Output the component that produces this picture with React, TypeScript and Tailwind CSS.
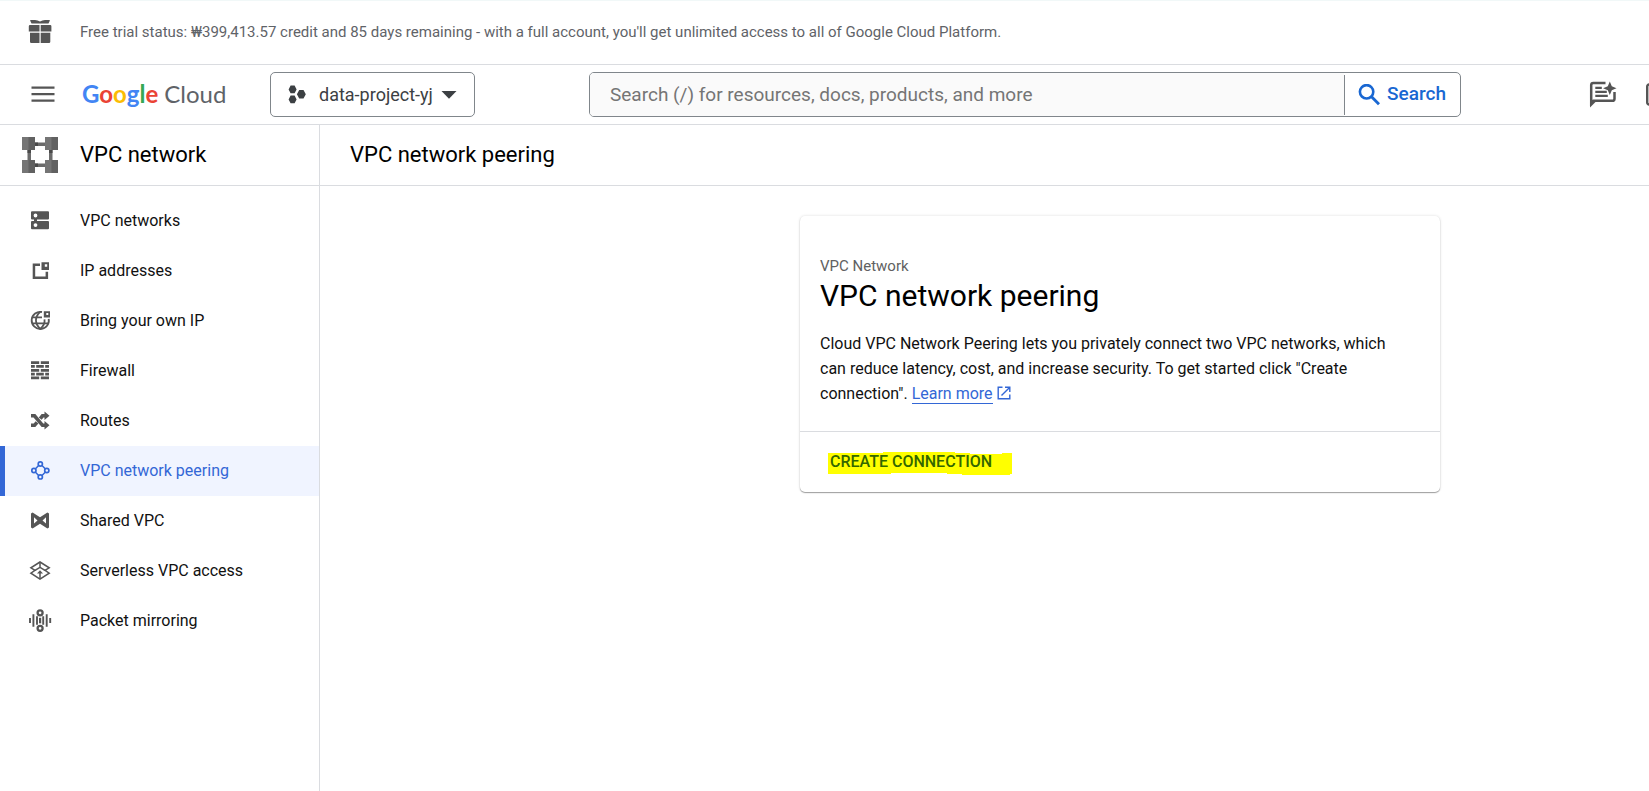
import type { ReactNode } from "react";

type IconProps = { children: ReactNode };

function NavIcon({ children }: IconProps) {
  return (
    <svg viewBox="0 0.7 24 24" className="size-6 shrink-0" fill="currentColor" aria-hidden="true">
      {children}
    </svg>
  );
}

const navItems: { label: string; active?: boolean; icon: ReactNode }[] = [
  {
    label: "VPC networks",
    icon: (
      <path
        fillRule="evenodd"
        d="M4 3h16a1 1 0 0 1 1 1v6.300a1 1 0 0 1-1 1H9v1.400h11a1 1 0 0 1 1 1V20a1 1 0 0 1-1 1H4a1 1 0 0 1-1-1v-6.300a1 1 0 0 1 1-1h2v-1.400H4a1 1 0 0 1-1-1V4a1 1 0 0 1 1-1zm3.500 2.300a1.900 1.900 0 1 0 0 3.800 1.900 1.900 0 0 0 0-3.800zm0 9.600a1.900 1.900 0 1 0 0 3.800 1.900 1.900 0 0 0 0-3.800z"
      />
    ),
  },
  {
    label: "IP addresses",
    icon: (
      <>
        <path d="M4.700 5.300H12v2.500H7.200v10.400h10.400V13.500h2.500v7.200H4.700z" />
        <path fillRule="evenodd" d="M13.500 4H21v7.700h-7.500zM16.800 6v2.500h2.400V6z" />
      </>
    ),
  },
  {
    label: "Bring your own IP",
    icon: (
      <>
        <g fill="none" stroke="currentColor" strokeWidth="1.800">
          <path d="M14 3.700A8.600 8.600 0 1 0 20.700 10.500" />
          <path d="M12.300 3.400C6.500 8.500 6.500 15.500 12.300 20.600C15.800 17.300 17 14 16.500 11" />
          <path d="M4.200 9H14M4.200 15H20.300" />
        </g>
        <path fillRule="evenodd" d="M15.800 3H22v6.300h-6.200zM18.300 4.800v2h2v-2z" />
      </>
    ),
  },
  {
    label: "Firewall",
    icon: (
      <path d="M3 3h8.200v2.700H3zM12.800 3H21v2.700h-8.200zM3 6.800h3.800v2.700H3zM8.200 6.800h7.600v2.700H8.200zM17.200 6.800H21v2.700h-3.800zM3 10.700h8.200v2.700H3zM12.800 10.700H21v2.700h-8.200zM3 14.500h3.800v2.700H3zM8.200 14.500h7.600v2.700H8.200zM17.200 14.500H21v2.700h-3.800zM3 18.300h8.200V21H3zM12.800 18.300H21V21h-8.200z" />
    ),
  },
  {
    label: "Routes",
    icon: (
      <>
        <path
          d="M3 7.500H6.500L14.500 17H17.500M3 17H6.500L9 14M12.200 10.400L14.500 7.500H17.500"
          fill="none"
          stroke="currentColor"
          strokeWidth="3.600"
        />
        <path d="M16.500 3.200L21.500 7.500l-5 4.300zM16.500 12.700L21.500 17l-5 4.300z" />
      </>
    ),
  },
  {
    label: "VPC network peering",
    active: true,
    icon: (
      <g fill="none" stroke="currentColor" strokeWidth="1.700">
        <circle cx="12.300" cy="5.700" r="2.100" />
        <circle cx="5.900" cy="12.200" r="2.100" />
        <circle cx="18.800" cy="12.200" r="2.100" />
        <circle cx="12.300" cy="18.600" r="2.100" />
        <path d="M10.600 7.100L7.500 10.400M14 7.100L17.200 10.400M10.600 17.200L7.500 14M14 17.200L17.200 14" strokeWidth="1.500" />
      </g>
    ),
  },
  {
    label: "Shared VPC",
    icon: (
      <path
        fillRule="evenodd"
        d="M4.600 4.300L12 8.900l7.400-4.600L21 5.200v14l-1.600.9L12 15.500l-7.400 4.600L3 19.200v-14zM6 9v6.300l3.500-3.100zM18 9l-3.500 3.200 3.500 3.100z"
      />
    ),
  },
  {
    label: "Serverless VPC access",
    icon: (
      <g fill="none" stroke="currentColor" strokeWidth="1.500">
        <path d="M12 3.700L2.900 9.500L7 12L2.900 14.900L12 20.800L21.200 14.900L17 12L21.200 9.500z" />
        <path d="M12 3.700V9M12 14V20.500M7 12L12 9L17 12" />
        <path d="M9 15.300L12 12L15 15.300z" fill="currentColor" stroke="none" />
      </g>
    ),
  },
  {
    label: "Packet mirroring",
    icon: (
      <g fill="none" stroke="currentColor" strokeWidth="2.300">
        <path d="M2 9.800v5M5.400 6v12.500M18.700 6v12.500M22.200 9.800v5" strokeWidth="1.900" />
        <path d="M9 8v8.500M15.200 8v8.500" strokeWidth="1.900" />
        <path d="M12.100 9.500v5.500" strokeWidth="2.200" />
        <circle cx="12.100" cy="4.500" r="2.500" />
        <circle cx="12.100" cy="20" r="2.500" />
      </g>
    ),
  },
];

function TrialBanner() {
  return (
    <div className="box-content flex h-[62px] items-center gap-7 border-t border-b border-t-[#f1f8f8] border-b-[#dadce0] pb-px pl-7">
      <svg viewBox="0 0 24 24" className="size-6 shrink-0 text-[#555]" fill="currentColor" aria-hidden="true">
        <path d="M2 .300C5-.300 9-.300 12 1.500C15-.300 19-.300 22 .300L20.500 3.500H3.500z" />
        <path d="M2 5h9.500v6.500H.8V6.200Q.8 5 2 5zM12.700 5h9.500q1.200 0 1.200 1.200v5.300H12.700zM2 12.700h9.500V23H3.300Q2 23 2 21.700zM12.700 12.700h9.600v9q0 1.300-1.300 1.300h-8.300z" />
      </svg>
      <p className="text-[15px] leading-5 text-[#5f6368]">
        Free trial status: ₩399,413.57 credit and 85 days remaining - with a full account, you'll get
        unlimited access to all of Google Cloud Platform.
      </p>
    </div>
  );
}

function Logo() {
  return (
    <a
      href="#home"
      aria-label="Google Cloud"
      className="flex w-[188px] shrink-0 gap-1.5 pb-0.5 font-[Lato,sans-serif] text-2xl leading-7 whitespace-nowrap text-[#5f6368]"
    >
      <span className="font-bold">
        <span className="text-[#4285f4]">G</span>
        <span className="text-[#ea4335]">o</span>
        <span className="text-[#fbbc04]">o</span>
        <span className="text-[#4285f4]">g</span>
        <span className="text-[#34a853]">l</span>
        <span className="text-[#ea4335]">e</span>
      </span>
      <span>Cloud</span>
    </a>
  );
}

function TopBar() {
  return (
    <header className="box-content flex h-[59px] items-center overflow-hidden border-b border-[#dadce0] pl-[30px]">
      <button type="button" aria-label="Navigation menu" className="mr-[26px] shrink-0 text-[#555]">
        <svg viewBox="0 0 26 26" className="size-[26px]" fill="currentColor" aria-hidden="true">
          <path d="M1.500 4.500h23v2.300h-23zM1.500 11h23v2.300h-23zM1.500 17.500h23v2.300h-23z" />
        </svg>
      </button>
      <Logo />
      <button
        type="button"
        className="flex h-[45px] w-[205px] shrink-0 items-center rounded-[5px] border border-[#80868b] pl-[17px] text-lg text-[#3c4043]"
      >
        <svg viewBox="0 0 18 20" className="mr-[13px] h-5 w-[18px] shrink-0" fill="currentColor" aria-hidden="true">
          <path d="M2.600.500h4l2 3.900-2 3.900h-4l-2-3.900zM2.600 10.500h4l2 3.900-2 3.900h-4l-2-3.900zM11.200 5h4.300l2.300 4.300-2.300 4.300h-4.300l-2.300-4.300z" />
        </svg>
        data-project-yj
        <svg viewBox="0 0 16 8" className="ml-2 h-2 w-4 shrink-0" fill="currentColor" aria-hidden="true">
          <path d="M.5 0h15L8 7.800z" />
        </svg>
      </button>
      <form
        role="search"
        onSubmit={(event) => event.preventDefault()}
        className="ml-[114px] flex h-[45px] w-[872px] shrink-0 items-center overflow-hidden rounded-[5px] border border-[#80868b]"
      >
        <input
          type="text"
          aria-label="Search"
          placeholder="Search (/) for resources, docs, products, and more"
          className="h-full min-w-0 flex-1 bg-[#fafafa] pl-5 text-[19px] text-[#3c4043] outline-none placeholder:text-[#757575]"
        />
        <button
          type="submit"
          className="flex h-10 w-[116px] items-center gap-[7px] border-l border-[#80868b] pl-[13px] text-[19px] font-medium text-[#1967d2]"
        >
          <svg viewBox="0 0 22 22" className="size-[22px]" fill="none" stroke="currentColor" aria-hidden="true">
            <circle cx="8.600" cy="7.800" r="6.700" strokeWidth="2.600" />
            <path d="M13.300 12.500l7.700 7.700" strokeWidth="2.900" />
          </svg>
          Search
        </button>
      </form>
      <div className="flex shrink-0 items-center gap-7 pl-32 text-[#555]">
        <button type="button" aria-label="Gemini assistant">
          <svg viewBox="0 0 28 28" className="size-7" fill="none" stroke="currentColor" aria-hidden="true">
            <path d="M16.500 2H4.300Q2.200 2 2.200 4.100V22L4.500 19.800H23.300Q25.500 19.800 25.500 17.700V11" strokeWidth="2.500" />
            <path d="M1 26.500V19H8.500z" fill="currentColor" stroke="none" />
            <path d="M6.300 6.900h6.500M6.300 10.800h11.500M6.300 14.800h12.500" strokeWidth="2.300" />
            <path d="M20.800.500l2 4.700 4.700 2-4.700 2-2 4.700-2-4.700-4.700-2 4.700-2z" fill="currentColor" stroke="none" />
          </svg>
        </button>
        <button type="button" aria-label="Cloud Shell">
          <svg viewBox="0 0 28 28" className="size-7" fill="none" stroke="currentColor" aria-hidden="true">
            <rect x="2.200" y="3.500" width="24" height="20" rx="2" strokeWidth="2.400" />
            <path d="M7 10l4 4-4 4M13.500 18h7" strokeWidth="2.200" />
          </svg>
        </button>
      </div>
    </header>
  );
}

function Sidebar() {
  return (
    <aside className="w-80 shrink-0 border-r border-[#dadce0]">
      <div className="box-content flex h-[60px] items-center gap-[22px] border-b border-[#dadce0] pl-[22px]">
        <svg viewBox="0 0 36 36" className="size-9 shrink-0" aria-hidden="true">
          <path d="M8 5.500h20v3.500H8zM8 26.500h20V30H8zM5.500 12H9v12H5.500zM27 12h3.500v12H27z" fill="#6b6b6b" />
          <path d="M13 5.500h3V9h-3zM13 26.500h3V30h-3zM5.500 13H9v3H5.500zM27 13h3.500v3H27z" fill="#4a4a4a" />
          <path d="M0 0h13v13H0zM23 0h13v13H23zM0 23h13v13H0zM23 23h13v13H23z" fill="#757575" />
          <path d="M6.500 0H13v13H6.500zM29.500 0H36v13h-6.500zM6.500 23H13v13H6.500zM29.500 23H36v13h-6.500z" fill="#616161" />
        </svg>
        <h2 className="text-[22px] leading-7">VPC network</h2>
      </div>
      <nav aria-label="VPC network">
        <ul className="pt-2.5">
          {navItems.map((item) => (
            <li key={item.label}>
              <a
                href="#nav"
                aria-current={item.active ? "page" : undefined}
                className={
                  item.active
                    ? "flex h-[50px] items-center gap-7 border-l-[5px] border-[#3367d6] bg-[#f0f4ff] pl-[23px] text-[#3367d6]"
                    : "flex h-[50px] items-center gap-7 pl-7 text-[#555]"
                }
              >
                <NavIcon>{item.icon}</NavIcon>
                <span className={item.active ? "text-base" : "text-base text-[#111]"}>{item.label}</span>
              </a>
            </li>
          ))}
        </ul>
      </nav>
    </aside>
  );
}

function PeeringCard() {
  return (
    <section className="mt-[30px] ml-[480px] w-[640px] rounded-[5px] bg-white shadow-[0_1px_1px_rgba(0,0,0,0.35),0_0_3px_rgba(0,0,0,0.14)]">
      <div className="border-b border-[#dadce0] pt-10 pr-10 pb-[25px] pl-5">
        <p className="text-[15px] leading-5 text-[#616161]">VPC Network</p>
        <h3 className="text-[30px] leading-10">VPC network peering</h3>
        <p className="mt-[15px] text-base leading-[25px] text-[#111]">
          Cloud VPC Network Peering lets you privately connect two VPC networks, which can reduce latency,
          cost, and increase security. To get started click "Create connection".{" "}
          <a href="#learn-more" className="whitespace-nowrap text-[#3367d6]">
            <span className="border-b border-[#3367d6]">Learn more</span>
            <svg
              viewBox="0 0 14 14"
              className="ml-1 inline size-3.5 align-[-1px]"
              fill="none"
              stroke="currentColor"
              strokeWidth="1.400"
              aria-hidden="true"
            >
              <path d="M5.500 1.200H1.200v11.600h11.600V8.500M8 1.200h4.800V6M12.800 1.200L4.500 9.500" />
            </svg>
          </a>
        </p>
      </div>
      <div className="flex h-[60px] items-center px-7">
        <button type="button" className="relative h-6 pr-5 pl-0.5 text-base font-medium text-[#336700]">
          <svg viewBox="0 0 184 23" className="absolute top-0.5 left-0 h-[23px] w-[184px]" aria-hidden="true">
            <path
              d="M0 1H55V0H127V1H142V2H174V1H184V22H182V23H134V22H119V21H63V22H0z"
              fill="#ffff00"
            />
          </svg>
          <span className="relative">CREATE CONNECTION</span>
        </button>
      </div>
    </section>
  );
}

export default function App() {
  return (
    <div className="flex min-h-screen flex-col overflow-x-hidden bg-white font-[Roboto,'Noto_Sans_CJK_KR',sans-serif] text-black">
      <TrialBanner />
      <TopBar />
      <div className="flex flex-1">
        <Sidebar />
        <main className="min-w-0 flex-1">
          <div className="box-content flex h-[60px] items-center border-b border-[#dadce0] pl-[30px]">
            <h1 className="text-[22px] leading-7">VPC network peering</h1>
          </div>
          <PeeringCard />
        </main>
      </div>
    </div>
  );
}
